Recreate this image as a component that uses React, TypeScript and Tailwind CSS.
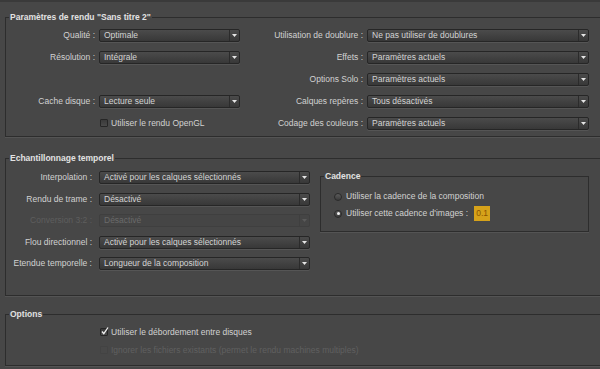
import type { ReactNode } from 'react';

// --- SMALL CONTROLS ---
function Dropdown({ value, className, disabled }: { value: string; className: string; disabled?: boolean }) {
  return (
    <div
      className={`flex h-[13px] items-stretch rounded-[2px] border ${className} ${
        disabled
          ? 'border-[#3f3f3f] bg-[#454545] text-[#6a6a6a]'
          : 'border-[#262626] bg-gradient-to-b from-[#4b4b4b] to-[#383838] text-[#d4d4d4] shadow-[0_1px_0_#555]'
      }`}
    >
      <span className="flex-1 truncate pl-[4px] leading-[11px]">{value}</span>
      <span className={`flex w-[10px] items-center justify-center border-l ${disabled ? 'border-[#3f3f3f]' : 'border-[#2b2b2b]'}`}>
        <svg width="5" height="3" viewBox="0 0 5 3">
          <path d="M0 0h5L2.5 3z" fill={disabled ? '#5a5a5a' : '#e6e6e6'} />
        </svg>
      </span>
    </div>
  );
}

function Label({ children, className = '', disabled }: { children: ReactNode; className?: string; disabled?: boolean }) {
  return (
    <span className={`whitespace-nowrap text-right ${disabled ? 'text-[#5e5e5e]' : 'text-[#d2d2d2]'} ${className}`}>{children}</span>
  );
}

function Checkbox({ label, checked, disabled }: { label: string; checked?: boolean; disabled?: boolean }) {
  return (
    <div className={`flex items-center gap-[3px] ${disabled ? 'text-[#606060]' : 'text-[#d2d2d2]'}`}>
      <span
        className={`relative h-[8px] w-[8px] rounded-[1px] border ${
          disabled ? 'border-[#434343] bg-[#484848]' : 'border-[#262626] bg-gradient-to-b from-[#3a3a3a] to-[#4a4a4a]'
        }`}
      >
        {checked && (
          <svg className="absolute left-[0px] top-[-2px]" width="8" height="8" viewBox="0 0 8 8">
            <path d="M1 4.5l1.8 2.2L7 0.5" stroke="#f0f0f0" strokeWidth="1.3" fill="none" />
          </svg>
        )}
      </span>
      <span className="whitespace-nowrap">{label}</span>
    </div>
  );
}

function Radio({ label, checked }: { label: string; checked?: boolean }) {
  return (
    <div className="flex items-center gap-[4px] text-[#d2d2d2]">
      <span className="flex h-[8px] w-[8px] items-center justify-center rounded-full border border-[#2a2a2a] bg-gradient-to-b from-[#5c5c5c] to-[#3c3c3c]">
        {checked && <span className="h-[3px] w-[3px] rounded-full bg-[#f2f2f2]" />}
      </span>
      <span className="whitespace-nowrap">{label}</span>
    </div>
  );
}

function Group({ title, children, className = '' }: { title: string; children: ReactNode; className?: string }) {
  return (
    <fieldset className={`border border-[#2d2d2d] p-0 shadow-[0_1px_0_#545454] ${className}`}>
      <legend className="ml-[3px] h-[12px] px-[1px] font-bold leading-[12px] text-[#e2e2e2]">{title}</legend>
      {children}
    </fieldset>
  );
}

// --- MAIN DIALOG ---
export default function App() {
  return (
    <div
      className="h-[369px] w-[600px] overflow-hidden border-t-2 border-[#3a3a3a] bg-[#474747] pt-[9px] text-[8.5px]"
      style={{ fontFamily: '"Liberation Sans", Arial, sans-serif' }}
    >
      <Group title={'Paramètres de rendu "Sans titre 2"'} className="ml-[5px] w-[600px] pb-[2px]">
        <div className="grid auto-rows-[22px] grid-cols-[93px_141px_127px_222px] items-center pt-[1px]">
          <Label className="pr-[4px]">Qualité :</Label>
          <Dropdown value="Optimale" className="w-[141px]" />
          <Label className="pr-[4px]">Utilisation de doublure :</Label>
          <Dropdown value="Ne pas utiliser de doublures" className="w-[222px]" />

          <Label className="pr-[4px]">Résolution :</Label>
          <Dropdown value="Intégrale" className="w-[141px]" />
          <Label className="pr-[4px]">Effets :</Label>
          <Dropdown value="Paramètres actuels" className="w-[222px]" />

          <span />
          <span />
          <Label className="pr-[4px]">Options Solo :</Label>
          <Dropdown value="Paramètres actuels" className="w-[222px]" />

          <Label className="pr-[4px]">Cache disque :</Label>
          <Dropdown value="Lecture seule" className="w-[141px]" />
          <Label className="pr-[4px]">Calques repères :</Label>
          <Dropdown value="Tous désactivés" className="w-[222px]" />

          <span />
          <div className="pl-[1px]">
            <Checkbox label="Utiliser le rendu OpenGL" />
          </div>
          <Label className="pr-[4px]">Codage des couleurs :</Label>
          <Dropdown value="Paramètres actuels" className="w-[222px]" />
        </div>
      </Group>

      <Group title="Echantillonnage temporel" className="ml-[5px] mt-[15px] w-[600px] pb-[21px]">
        <div className="flex pt-[2px]">
          <div className="grid grid-cols-[93px_211px] grid-rows-[22px_22px_21px_22px_21px] items-center">
            <Label className="pr-[7px]">Interpolation :</Label>
            <Dropdown value="Activé pour les calques sélectionnés" className="w-[211px]" />
            <Label className="pr-[7px]">Rendu de trame :</Label>
            <Dropdown value="Désactivé" className="w-[211px]" />
            <Label className="pr-[7px]" disabled>Conversion 3:2 :</Label>
            <Dropdown value="Désactivé" className="w-[211px]" disabled />
            <Label className="pr-[7px]">Flou directionnel :</Label>
            <Dropdown value="Activé pour les calques sélectionnés" className="w-[211px]" />
            <Label className="pr-[7px]">Etendue temporelle :</Label>
            <Dropdown value="Longueur de la composition" className="w-[211px]" />
          </div>

          <Group title="Cadence" className="ml-[10px] mt-[4px] h-fit w-[269px] pb-[9px]">
            <div className="flex flex-col pl-[13px] pt-[6px]">
              <div className="flex h-[17px] items-center">
                <Radio label="Utiliser la cadence de la composition" />
              </div>
              <div className="flex h-[17px] items-center gap-[6px]">
                <Radio label="Utiliser cette cadence d'images :" checked />
                <span className="flex h-[15px] w-[16px] items-center justify-center bg-[#d6a21a] text-[#8a5200]">0.1</span>
              </div>
            </div>
          </Group>
        </div>
      </Group>

      <Group title="Options" className="ml-[5px] mt-[12px] w-[600px] pb-[6px]">
        <div className="flex flex-col pl-[94px] pt-[3px]">
          <div className="flex h-[18px] items-center">
            <Checkbox label="Utiliser le débordement entre disques" checked />
          </div>
          <div className="flex h-[18px] items-center">
            <Checkbox label="Ignorer les fichiers existants (permet le rendu machines multiples)" disabled />
          </div>
        </div>
      </Group>
    </div>
  );
}
